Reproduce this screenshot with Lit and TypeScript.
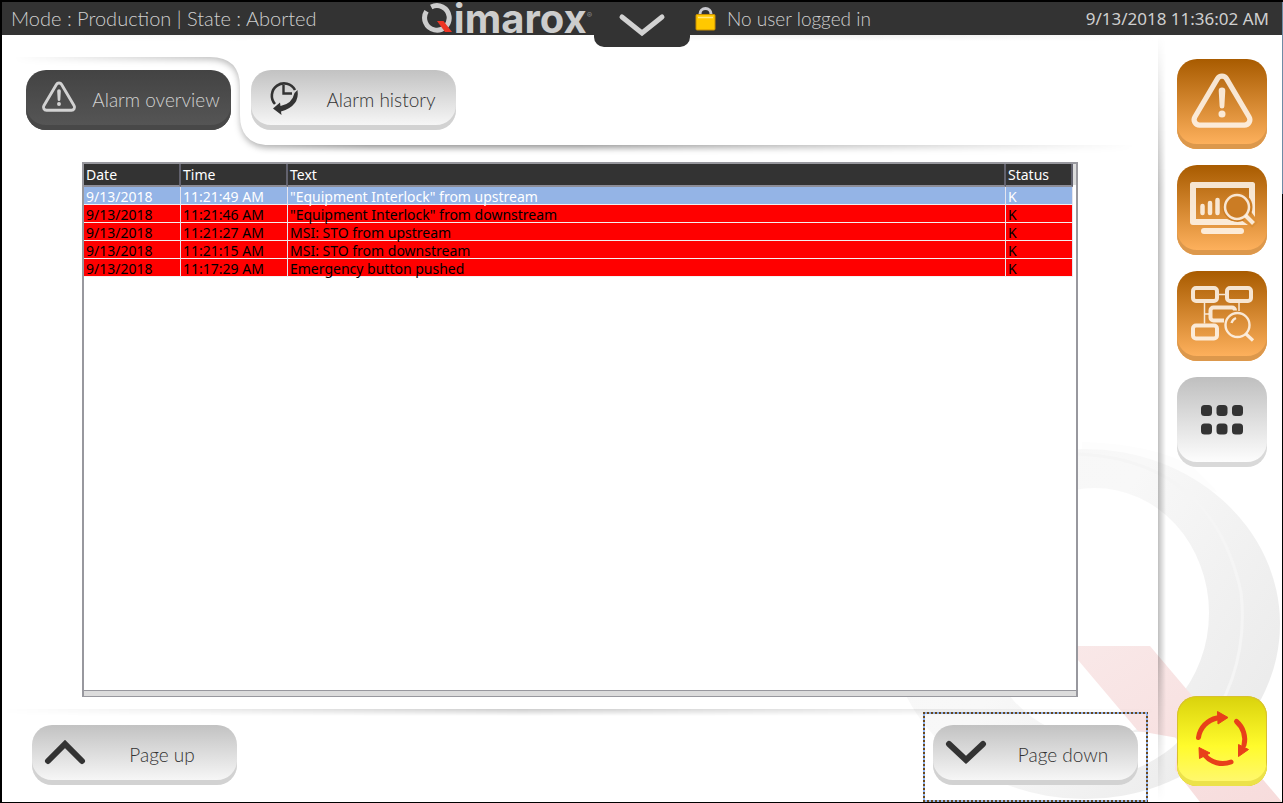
import { LitElement, html, css, svg, nothing } from "lit";
import { customElement, property } from "lit/decorators.js";

interface Alarm {
  date: string;
  time: string;
  text: string;
  status: string;
}

const ALARMS: Alarm[] = [
  { date: "9/13/2018", time: "11:21:49 AM", text: '"Equipment Interlock" from upstream', status: "K" },
  { date: "9/13/2018", time: "11:21:46 AM", text: '"Equipment Interlock" from downstream', status: "K" },
  { date: "9/13/2018", time: "11:21:27 AM", text: "MSI: STO from upstream", status: "K" },
  { date: "9/13/2018", time: "11:21:15 AM", text: "MSI: STO from downstream", status: "K" },
  { date: "9/13/2018", time: "11:17:29 AM", text: "Emergency button pushed", status: "K" },
];

const warning = svg`
  <path d="M26.5 9.5a5.2 5.2 0 0 1 9 0L57.3 46.5a5.2 5.2 0 0 1 -4.5 7.8H9.2a5.2 5.2 0 0 1 -4.5 -7.8Z" fill="none" stroke="currentColor" stroke-width="5" stroke-linejoin="round"/>
  <path d="M27.8 21a3.2 3.2 0 0 1 6.4 0l-.9 15a2.3 2.3 0 0 1 -4.6 0Z" fill="currentColor"/>
  <circle cx="31" cy="43.5" r="3.4" fill="currentColor"/>`;

@customElement("hmi-button")
export class HmiButton extends LitElement {
  @property() label = "";
  @property() tone = "light";
  @property({ attribute: false }) icon: unknown = nothing;

  static styles = css`
    :host { display: block; }
    .button {
      display: grid;
      grid-template-columns: 65px 1fr;
      align-items: center;
      width: 205px;
      height: 60px;
      padding: 0 10px 5px 0;
      border: 0;
      border-radius: 20px;
      background: linear-gradient(#c2c2c2, #f6f6f6 55px);
      box-shadow: inset 0 -5px #d2d2d2;
      color: #333;
      font: 300 19px/24px "Century Gothic", "Lato", sans-serif;
      white-space: nowrap;
      cursor: pointer;
    }
    .dark {
      background: linear-gradient(#434343, #555 55px);
      box-shadow: inset 0 -5px #484848;
      color: #d2d2d2;
    }
    .icon { display: grid; place-items: center; }
    .label { padding-top: 4px; text-align: center; }
  `;

  render() {
    return html`<button class="button ${this.tone}" type="button">
      <span class="icon">${this.icon}</span><span class="label">${this.label}</span>
    </button>`;
  }
}

@customElement("hmi-tile")
export class HmiTile extends LitElement {
  @property() label = "";
  @property() tone = "orange";
  @property({ attribute: false }) icon: unknown = nothing;

  static styles = css`
    :host { display: block; }
    .tile {
      display: grid;
      place-items: center;
      width: 90px;
      height: 90px;
      padding: 0 0 5px;
      border: 0;
      border-radius: 20px;
      cursor: pointer;
    }
    .orange {
      background: linear-gradient(#a85b00, #fdb05c 85px);
      box-shadow: inset 0 -5px #dc984c;
      color: rgba(255, 248, 240, 0.86);
    }
    .grey {
      background: linear-gradient(#bfbfbf, #fdfdfd 85px);
      box-shadow: inset 0 -5px #d9d9d9;
      color: #333;
    }
    .yellow {
      background: linear-gradient(#d9d20c, #fffb2c 50px, #fff86c 85px);
      box-shadow: inset 0 -5px #ece24a, inset 0 0 0 1px #d8c030;
      color: #e8401a;
    }
    svg { display: block; }
  `;

  render() {
    return html`<button class="tile ${this.tone}" type="button" aria-label=${this.label}>
      <svg width="90" height="85" viewBox="0 0 90 85" aria-hidden="true">${this.icon}</svg>
    </button>`;
  }
}

@customElement("alarm-table")
export class AlarmTable extends LitElement {
  static styles = css`
    :host {
      display: flex;
      flex-direction: column;
      border: 2px solid #98989e;
      border-bottom-width: 1px;
      background: #fff;
    }
    .scroll {
      flex: 1;
      padding-right: 3px;
      background: linear-gradient(#dcdcdc, #dcdcdc) top right / 3px 21px no-repeat;
    }
    .table {
      width: 100%;
      table-layout: fixed;
      border-spacing: 0;
      font: 14px/20px "Tahoma", "Noto Sans", sans-serif;
      color: #000;
    }
    th, td {
      box-sizing: border-box;
      padding: 0 2px;
      border-right: 1px solid #e4e4ee;
      border-bottom: 1px solid #f4f0f0;
      text-align: left;
      font-weight: 400;
      white-space: nowrap;
    }
    th {
      height: 23px;
      border-right: 2px solid #62626e;
      border-bottom: 2px solid #8c8c96;
      background: #333;
      color: #fff;
    }
    td { height: 18px; background: #f00; }
    .cell { height: 17px; }
    .selected td { background: #94b4e6; color: #fff; }
    .date { width: 97px; }
    .time { width: 107px; }
    .status { width: 67px; }
    .bar { height: 5px; border-top: 1px solid #98989e; background: #dcdcdc; }
  `;

  render() {
    return html`
      <div class="scroll">
        <table class="table">
          <thead>
            <tr>
              <th class="date">Date</th>
              <th class="time">Time</th>
              <th>Text</th>
              <th class="status">Status</th>
            </tr>
          </thead>
          <tbody>
            ${ALARMS.map(
              (a, i) => html`<tr class=${i === 0 ? "selected" : ""}>
                ${[a.date, a.time, a.text, a.status].map((value) => html`<td><div class="cell">${value}</div></td>`)}
              </tr>`
            )}
          </tbody>
        </table>
      </div>
      <div class="bar"></div>
    `;
  }
}

const chartIcon = svg`
  <path d="M15.500 17H75.500Q78 17 78 19.500V52L72 44V23H19V54H50a17 17 0 0 0 14 1l7 5H16q-3 0-3-3V19.500Q13 17 15.500 17Z" fill="currentColor"/>
  <rect x="24" y="63" width="43" height="6" rx="3" fill="currentColor"/>
  <path d="M25.5 41v7M33 38v10M40.5 35v13" stroke="currentColor" stroke-width="4.5" stroke-linecap="round"/>
  <circle cx="60.5" cy="42" r="15" fill="#cb7c24"/>
  <path d="M69 51l9 9" stroke="#dc9038" stroke-width="8"/>
  <circle cx="60" cy="42" r="12" fill="none" stroke="currentColor" stroke-width="2.5"/>
  <path d="M68.5 50.5l8 8" stroke="currentColor" stroke-width="4"/>`;

const flowIcon = svg`
  <g fill="none" stroke="currentColor">
    <rect x="16" y="17" width="24" height="13" rx="3" stroke-width="4"/>
    <rect x="50" y="17" width="24" height="13" rx="3" stroke-width="4"/>
    <rect x="16" y="54.5" width="24" height="13" rx="3" stroke-width="4"/>
    <path d="M58 39.500a3 3 0 0 0-3-3H36.500a3 3 0 0 0-3 3v7a3 3 0 0 0 3 3H47" stroke-width="4"/>
    <path d="M42 23.500h6M27.500 32v20.500M27.500 43H32M62 32v8" stroke-width="1.5"/>
    <circle cx="60.5" cy="54" r="12" stroke-width="2.4"/>
    <path d="M69 63l7 6.500" stroke-width="3.2"/>
    <path d="M54.500 52q1-3.500 4.500-5" stroke-width="2.4"/>
  </g>`;

const dotsIcon = svg`<g fill="currentColor">
  ${[24, 39.5, 55].map((x) => [28, 46.5].map((y) => svg`<rect x=${x} y=${y} width="11" height="11" rx="3.5"/>`))}
</g>`;

const cycleIcon = svg`
  <g fill="none" stroke="currentColor" stroke-width="5" stroke-linecap="round">
    <path d="M21.5 41.5A23.5 23.5 0 0 1 40 22"/>
    <path d="M59.5 25.5A23.5 23.5 0 0 1 67 49"/>
    <path d="M54 66A23.5 23.5 0 0 1 27.5 59"/>
  </g>
  <g fill="currentColor" stroke="currentColor" stroke-linejoin="round">
    <path d="M40.5 15.5L51 21.5L41 28Z"/>
    <path d="M61.5 48.5L71.5 53.5L61.5 60.5Z"/>
    <path d="M22 51.5L33 57L22.5 62.5Z"/>
  </g>`;

const chevron = (up: boolean) => html`<svg width="42" height="26" viewBox="0 0 42 26" aria-hidden="true">
  <path d=${up ? "M4 21L21 4L38 21" : "M4 4L21 20L38 4"} fill="none" stroke="currentColor" stroke-width="6" stroke-linecap="round"/>
</svg>`;

@customElement("app-root")
export class AppRoot extends LitElement {
  static styles = css`
    :host {
      display: block;
      font-family: "Century Gothic", "Lato", sans-serif;
    }
    .shell {
      position: relative;
      box-sizing: border-box;
      display: flex;
      flex-direction: column;
      min-height: 100vh;
      border: solid #000;
      border-width: 2px 1px 1px 2px;
      background: #fff;
    }
    .shell::after {
      content: "";
      position: absolute;
      top: 0;
      right: -1px;
      width: 1px;
      height: 192px;
      background: #6f8ba4;
    }
    .header {
      position: relative;
      z-index: 2;
      display: grid;
      grid-template-columns: 1fr 96px 1fr;
      grid-template-rows: 33px;
      background: #333;
      color: #cfcfcf;
      font-size: 19px;
      font-weight: 300;
      line-height: 33px;
      white-space: nowrap;
    }
    .left { display: flex; justify-content: space-between; padding: 0 2px 0 9px; }
    .right { display: flex; justify-content: space-between; padding: 0 13px 0 5px; }
    .mode { font-size: 20px; }
    .brand {
      display: flex;
      color: #cdcdcd;
      font: 700 40px/33px "Inter", sans-serif;
    }
    .reg { font: 8px/26px "Inter", sans-serif; color: #888; }
    .user { display: flex; align-items: center; gap: 11px; }
    .clock { font: 17px/33px "Tahoma", "Noto Sans", sans-serif; }
    .menu {
      height: 45px;
      padding: 0;
      border: 0;
      border-radius: 0 0 10px 10px;
      background: #333;
      color: #d2d2d2;
      cursor: pointer;
    }
    .menu svg { display: block; margin: 0 auto; }
    .watermark { position: absolute; right: 0; bottom: 0; }
    .main { position: relative; flex: 1; display: flex; }
    .content {
      flex: 1;
      display: flex;
      flex-direction: column;
      background: linear-gradient(transparent, #fff) top / 100% 6px no-repeat,
        linear-gradient(90deg, transparent 5%, rgba(0, 0, 0, 0.22) 50%, transparent) top / 100% 6px no-repeat;
    }
    .tabs { position: relative; display: flex; gap: 20px; padding: 35px 24px 32px; }
    .tabs hmi-button { position: relative; }
    .swoosh {
      position: absolute;
      inset: 0;
      width: 100%;
      height: 100%;
      -webkit-mask-image: linear-gradient(90deg, transparent 1%, rgba(0, 0, 0, 0.6) 19%, #000 32%, #000 50%, transparent 98%);
      mask-image: linear-gradient(90deg, transparent 1%, rgba(0, 0, 0, 0.6) 19%, #000 32%, #000 50%, transparent 98%);
    }
    .panel { fill: #fff; filter: drop-shadow(0 3px 3px rgba(0, 0, 0, 0.42)); }
    alarm-table { flex: 1; margin: 0 80px; }
    .pager {
      position: relative;
      display: flex;
      justify-content: space-between;
      align-items: flex-start;
      margin-top: 12px;
      padding: 3px 10px 0 30px;
    }
    .pager::before {
      content: "";
      position: absolute;
      inset: 0 0 auto;
      height: 7px;
      background: linear-gradient(90deg, transparent, rgba(0, 0, 0, 0.2) 45%, transparent);
      -webkit-mask-image: linear-gradient(#000, transparent);
      mask-image: linear-gradient(#000, transparent);
    }
    .pager > hmi-button { margin-top: 13px; }
    .focus {
      --h: repeating-linear-gradient(90deg, #6b4a1c 0 2px, #94b6f0 2px 4px);
      --v: repeating-linear-gradient(#6b4a1c 0 2px, #94b6f0 2px 4px);
      padding: 13px 10px 17px;
      background: var(--h) top / 100% 2px no-repeat, var(--h) bottom / 100% 2px no-repeat,
        var(--v) left / 2px 100% no-repeat, var(--v) right / 2px 100% no-repeat;
    }
    .side {
      position: relative;
      display: flex;
      flex-direction: column;
      gap: 16px;
      padding: 24px 15px 16px 19px;
    }
    .side::before {
      content: "";
      position: absolute;
      inset: 0 auto 0 0;
      width: 8px;
      background: linear-gradient(90deg, rgba(0, 0, 0, 0.25), transparent);
      -webkit-mask-image: linear-gradient(transparent, #000 20%, #000 80%, transparent);
      mask-image: linear-gradient(transparent, #000 20%, #000 80%, transparent);
    }
    .cycle { margin-top: auto; }
  `;

  render() {
    return html`
      <div class="shell">
        <svg class="watermark" width="400" height="360" viewBox="0 0 400 360" aria-hidden="true">
          <defs>
            <linearGradient id="ring" x1="0" y1="0" x2="1" y2="0.6">
              <stop offset="0" stop-color="#f7f7f7"/>
              <stop offset="0.5" stop-color="#f8f8f8"/>
              <stop offset="1" stop-color="#ececec"/>
            </linearGradient>
            <linearGradient id="tail" x1="0" y1="0" x2="1" y2="1">
              <stop offset="0" stop-color="#f9e9e9"/>
              <stop offset="1" stop-color="#f7dcdc"/>
            </linearGradient>
          </defs>
          <path d="M200 0Q270 2 310 24L335 50L200 30Z" fill="#fdfdfd"/>
          <path fill-rule="evenodd" fill="url(#ring)" d="M7 182a195.500 175 0 1 1 391 0a195.500 175 0 1 1 -391 0ZM99 171a114 125 0 1 0 228 0a114 125 0 1 0 -228 0Z"/>
          <path d="M196 12Q330 18 359 150Q368 230 318 296" fill="none" stroke="#f5f5f5" stroke-width="3"/>
          <path d="M256 326Q282 314 296 300L290 290H240Z" fill="#fff"/>
          <path d="M150 204H268L400 360H318L293 328L296 296L256 289L196 218Z" fill="url(#tail)"/>
        </svg>
        <header class="header">
          <div class="left">
            <span class="mode">Mode : Production | State : Aborted</span>
            <span class="brand">
              <svg width="32" height="33" viewBox="0 0 32 33" aria-hidden="true">
                <path d="M10 4.500A12.300 12.300 0 1 1 5 8.500" transform="rotate(-4 16 16)" fill="none" stroke="#cdcdcd" stroke-width="5"/>
                <path d="M15 19H21.500L30 30H23Z" fill="#ee3524"/>
              </svg><span>imarox</span><span class="reg">®</span>
            </span>
          </div>
          <button class="menu" type="button" aria-label="Open menu">
            <svg width="50" height="28" viewBox="0 0 50 28" aria-hidden="true">
              <path d="M5 6L25 22L45 6" fill="none" stroke="currentColor" stroke-width="5" stroke-linecap="round"/>
            </svg>
          </button>
          <div class="right">
            <span class="user">
              <svg width="21" height="24" viewBox="0 0 21 24" aria-hidden="true">
                <path d="M5 10V7a5.500 5.500 0 0 1 11 0v3" fill="none" stroke="#c9c9cf" stroke-width="3"/>
                <rect x="1" y="7.5" width="19" height="15.5" rx="1" fill="#ffc800" stroke="#c98f00"/>
                <path d="M3 10.500H18" stroke="#ffe680" stroke-width="1.5"/>
              </svg>
              <span>No user logged in</span>
            </span>
            <time class="clock">9/13/2018 11:36:02 AM</time>
          </div>
        </header>
        <main class="main">
          <section class="content">
            <nav class="tabs">
              <svg class="swoosh" aria-hidden="true">
                <path class="panel" d="M-50 -50H4000V110H268Q238 110 238 80V52Q238 22 208 22H-50Z"/>
              </svg>
              <hmi-button
                tone="dark"
                label="Alarm overview"
                .icon=${html`<svg width="36" height="38" viewBox="0 0 62 66" aria-hidden="true">${warning}</svg>`}
              ></hmi-button>
              <hmi-button
                label="Alarm history"
                .icon=${html`<svg width="32" height="38" viewBox="0 0 32 38" aria-hidden="true">
                  <path d="M7 26A12.300 12.300 0 1 1 27 12" transform="translate(0 -1)" fill="none" stroke="currentColor" stroke-width="2.6"/>
                  <path d="M15.500 6V14.500H24" fill="none" stroke="currentColor" stroke-width="2.4"/>
                  <path d="M29.500 11Q32 27 13 32.500L13.500 36L5 29.500L12 23.500L12.500 27Q24 25 26.500 14Z" fill="currentColor"/>
                </svg>`}
              ></hmi-button>
            </nav>
            <alarm-table></alarm-table>
            <div class="pager">
              <hmi-button label="Page up" .icon=${chevron(true)}></hmi-button>
              <div class="focus"><hmi-button label="Page down" .icon=${chevron(false)}></hmi-button></div>
            </div>
          </section>
          <aside class="side">
            <hmi-tile
              label="Alarms"
              .icon=${svg`<svg x="13" y="10" width="64" height="62" viewBox="0 0 62 60">${warning}</svg>`}
            ></hmi-tile>
            <hmi-tile label="Diagnostics" .icon=${chartIcon}></hmi-tile>
            <hmi-tile label="Process overview" .icon=${flowIcon}></hmi-tile>
            <hmi-tile tone="grey" label="Menu" .icon=${dotsIcon}></hmi-tile>
            <hmi-tile class="cycle" tone="yellow" label="Cycle" .icon=${cycleIcon}></hmi-tile>
          </aside>
        </main>
      </div>
    `;
  }
}
